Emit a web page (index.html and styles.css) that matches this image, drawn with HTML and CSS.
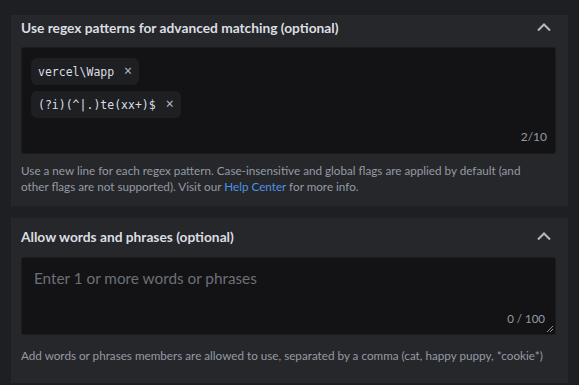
FILE: index.html
```html
<!DOCTYPE html>
<html>
<head>
<meta charset="utf-8">
<link rel="stylesheet" href="styles.css">
</head>
<body>
<div class="page">
  <section class="panel panel-top">
    <div class="head">
      <h2 class="title">Use regex patterns for advanced matching (optional)</h2>
      <svg class="chev" width="16" height="10" viewBox="0 0 16 10"><path d="M2 8.5 L8 2.5 L14 8.5" fill="none" stroke="#b5bac1" stroke-width="2"/></svg>
    </div>
    <div class="box box-regex">
      <div class="chips">
        <span class="chip">vercel\Wapp <span class="x">×</span></span>
        <span class="chip">(?i)(^|.)te(xx+)$ <span class="x">×</span></span>
      </div>
      <div class="count">2/10</div>
    </div>
    <p class="help help1">Use a new line for each regex pattern. Case-insensitive and global flags are applied by default (and other flags are not supported). Visit our <a class="link">Help Center</a> for more info.</p>
  </section>
  <section class="panel panel-bottom">
    <div class="head">
      <h2 class="title">Allow words and phrases (optional)</h2>
      <svg class="chev" width="16" height="10" viewBox="0 0 16 10"><path d="M2 8.5 L8 2.5 L14 8.5" fill="none" stroke="#b5bac1" stroke-width="2"/></svg>
    </div>
    <div class="box box-words">
      <div class="placeholder">Enter 1 or more words or phrases</div>
      <div class="count count2">0 / 100</div>
      <svg class="grip" width="8" height="8" viewBox="0 0 8 8"><path d="M1 7 L7 1 M4 7 L7 4" stroke="#8e9297" stroke-width="1"/></svg>
    </div>
    <p class="help help2">Add words or phrases members are allowed to use, separated by a comma (cat, happy puppy, *cookie*)</p>
  </section>
</div>
</body>
</html>
```
FILE: styles.css
```css
html, body {
  margin: 0;
  padding: 0;
  background: #1e1f22;
  width: 579px;
  height: 385px;
  overflow: hidden;
  font-family: "Lato", "Noto Sans", sans-serif;
}
.page {
  padding: 15px 11px 0 11px;
  display: flex;
  flex-direction: column;
  gap: 12px;
}
.panel {
  background: #26272b;
  padding: 0 12px 0 10px;
}
.panel-top {
  padding-top: 0;
  padding-bottom: 12px;
}
.head {
  display: flex;
  justify-content: space-between;
  align-items: center;
  height: 24px;
  margin-bottom: 8px;
}
.title {
  margin: 0;
  font-size: 13.75px;
  font-weight: 700;
  color: #dbdee1;
}
.chev {
  margin-right: 4px;
}
.box {
  background: #131315;
  border: 1px solid #1b1c1f;
  border-radius: 3px;
  position: relative;
}
.box-regex {
  height: 105px;
}
.chips {
  padding: 10px 9px;
  display: flex;
  flex-direction: column;
  align-items: flex-start;
  gap: 6px;
}
.chip {
  background: #1e1f23;
  border-radius: 6px;
  padding: 4px 7px;
  font-family: "DejaVu Sans Mono", monospace;
  font-size: 11.5px;
  line-height: 18px;
  color: #dbdee1;
}
.chip .x {
  font-family: "Noto Sans", sans-serif;
  font-size: 14px;
  margin-left: 3px;
  color: #b5bac1;
}
.count {
  position: absolute;
  right: 8px;
  bottom: 9px;
  font-size: 12px;
  color: #949ba4;
}
.help {
  margin: 8px 0 0 0;
  font-size: 11.7px;
  line-height: 16px;
  color: #949ba4;
}
.help1 {
  padding-right: 14px;
}
.link {
  color: #4c93e6;
}
.panel-bottom {
  padding-top: 6px;
  padding-bottom: 20px;
}
.panel-bottom .head {
  margin-bottom: 9px;
}
.box-words {
  height: 76px;
}
.placeholder {
  padding: 11px 12px;
  font-size: 15.3px;
  color: #6d6f78;
}
.count2 {
  font-size: 11.5px;
  bottom: 9px;
  right: 10px;
}
.grip {
  position: absolute;
  right: 1px;
  bottom: 1px;
}
.help2 {
  margin-top: 12px;
}
```
